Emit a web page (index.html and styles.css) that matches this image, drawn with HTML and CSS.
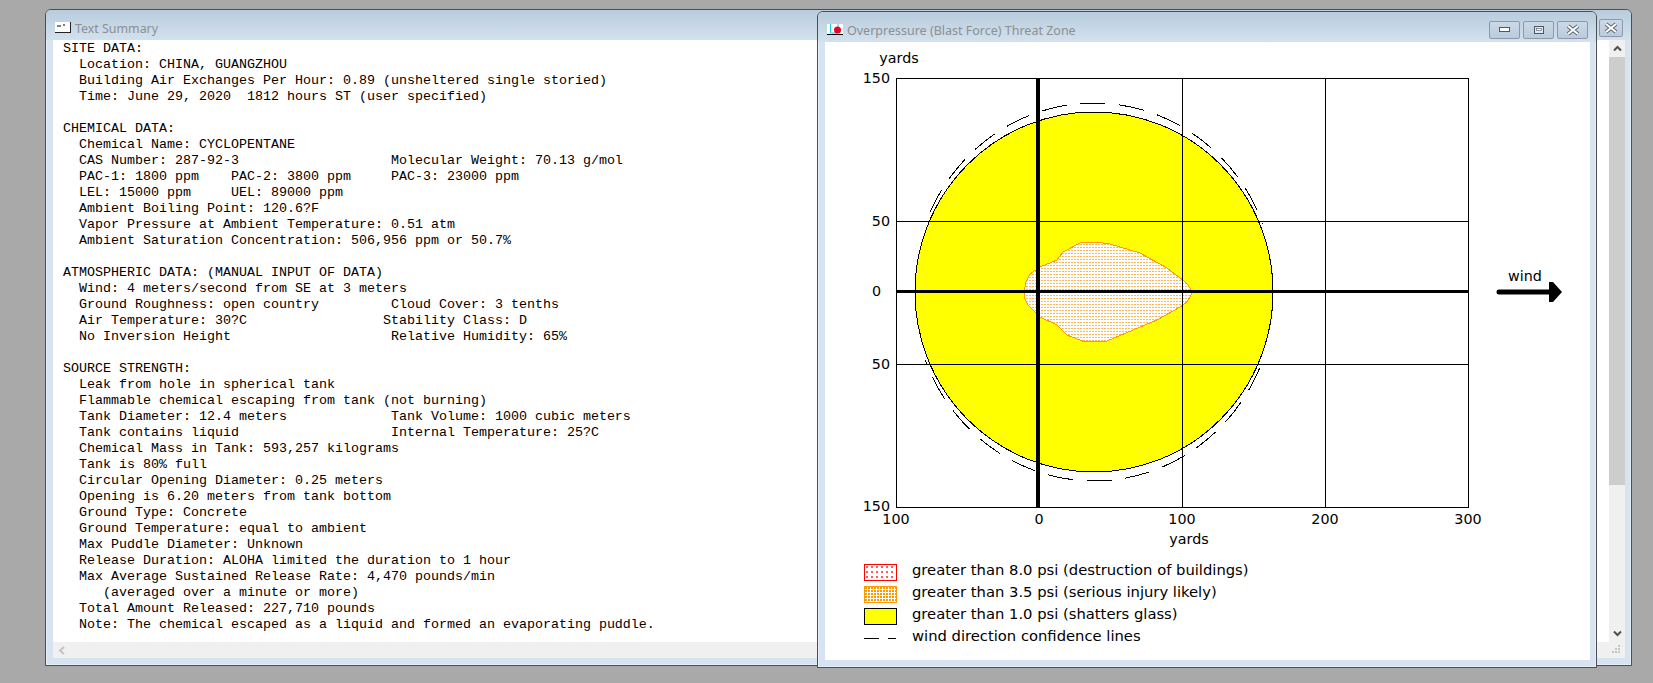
FILE: index.html
```html
<!DOCTYPE html>
<html lang="en">
<head>
	<meta charset="UTF-8">
	<title>ALOHA Threat Zone</title>
	<link rel="stylesheet" href="styles.css">
</head>
<body>
	<!-- back window -->
	<div class="window summary-win">
		<div class="titlebar">
			<svg class="title-icon" width="16" height="12" viewBox="0 0 16 12">
				<rect x="0" y="0" width="15" height="10" fill="#fff"/>
				<path d="M0 10.5H16M15.5 0V11" stroke="#222" fill="none"/>
				<path d="M3 3V5M5 3V5M8 3H10" stroke="#000" fill="none"/>
			</svg>
			<span class="title-text">Text Summary</span>
			<div class="win-btns">
				<div class="win-btn">
					<svg width="16" height="12" viewBox="0 0 16 12"><path d="M3 2L13 10M13 2L3 10" stroke="#5c6472" stroke-width="4"/><path d="M3 2L13 10M13 2L3 10" stroke="#fff" stroke-width="2"/></svg>
				</div>
			</div>
		</div>
		<div class="summary-body">
			<pre class="summary-text">SITE DATA:
  Location: CHINA, GUANGZHOU
  Building Air Exchanges Per Hour: 0.89 (unsheltered single storied)
  Time: June 29, 2020  1812 hours ST (user specified)

CHEMICAL DATA:
  Chemical Name: CYCLOPENTANE
  CAS Number: 287-92-3                   Molecular Weight: 70.13 g/mol
  PAC-1: 1800 ppm    PAC-2: 3800 ppm     PAC-3: 23000 ppm
  LEL: 15000 ppm     UEL: 89000 ppm
  Ambient Boiling Point: 120.6?F
  Vapor Pressure at Ambient Temperature: 0.51 atm
  Ambient Saturation Concentration: 506,956 ppm or 50.7%

ATMOSPHERIC DATA: (MANUAL INPUT OF DATA)
  Wind: 4 meters/second from SE at 3 meters
  Ground Roughness: open country         Cloud Cover: 3 tenths
  Air Temperature: 30?C                 Stability Class: D
  No Inversion Height                    Relative Humidity: 65%

SOURCE STRENGTH:
  Leak from hole in spherical tank
  Flammable chemical escaping from tank (not burning)
  Tank Diameter: 12.4 meters             Tank Volume: 1000 cubic meters
  Tank contains liquid                   Internal Temperature: 25?C
  Chemical Mass in Tank: 593,257 kilograms
  Tank is 80% full
  Circular Opening Diameter: 0.25 meters
  Opening is 6.20 meters from tank bottom
  Ground Type: Concrete
  Ground Temperature: equal to ambient
  Max Puddle Diameter: Unknown
  Release Duration: ALOHA limited the duration to 1 hour
  Max Average Sustained Release Rate: 4,470 pounds/min
     (averaged over a minute or more)
  Total Amount Released: 227,710 pounds
  Note: The chemical escaped as a liquid and formed an evaporating puddle.</pre>
			<div class="vscroll">
				<div class="scroll-btn">
					<svg width="9" height="7" viewBox="0 0 9 7"><path d="M1 5.5L4.5 2L8 5.5" fill="none" stroke="#505050" stroke-width="2"/></svg>
				</div>
				<div class="scroll-thumb"></div>
				<div class="scroll-track"></div>
				<div class="scroll-btn">
					<svg width="9" height="7" viewBox="0 0 9 7"><path d="M1 1.5L4.5 5L8 1.5" fill="none" stroke="#505050" stroke-width="2"/></svg>
				</div>
			</div>
		</div>
		<div class="hscroll">
			<svg width="8" height="9" viewBox="0 0 8 9"><path d="M6 1L2 4.5L6 8" fill="none" stroke="#c2c2c2" stroke-width="2"/></svg>
			<svg class="grip" width="12" height="12" viewBox="0 0 12 12"><path d="M8 1h2v2H8zM5 4h2v2H5zM8 4h2v2H8zM2 7h2v2H2zM5 7h2v2H5zM8 7h2v2H8z" fill="#c4c4c4"/></svg>
		</div>
	</div>

	<!-- front window -->
	<div class="window threat-win">
		<div class="titlebar">
			<svg class="title-icon" width="16" height="12" viewBox="0 0 16 12">
				<rect x="0" y="0" width="16" height="10" fill="#fff"/>
				<path d="M3.5 0V9H11M11 0V5" stroke="#19d3e6" fill="none"/>
				<circle cx="10.5" cy="6" r="3.5" fill="#f0002a"/>
				<path d="M0 10.5H16" stroke="#000"/>
			</svg>
			<span class="title-text">Overpressure (Blast Force) Threat Zone</span>
			<div class="win-btns">
				<div class="win-btn">
					<svg width="12" height="6" viewBox="0 0 12 6"><rect x="0.5" y="0.5" width="10" height="4" fill="#fff" stroke="#4e5664"/></svg>
				</div>
				<div class="win-btn">
					<svg width="12" height="10" viewBox="0 0 12 10"><rect x="1.5" y="1.5" width="9" height="7" fill="#dfe8f2" stroke="#4e5664"/><rect x="3.5" y="3.5" width="5" height="2" fill="#fff" stroke="#4e5664" stroke-width="0.6"/></svg>
				</div>
				<div class="win-btn">
					<svg width="16" height="12" viewBox="0 0 16 12"><path d="M3 2L13 10M13 2L3 10" stroke="#5c6472" stroke-width="4"/><path d="M3 2L13 10M13 2L3 10" stroke="#fff" stroke-width="2"/></svg>
				</div>
			</div>
		</div>
		<div class="threat-body">
			<svg class="chart" width="765" height="517" viewBox="825 42 765 517">
				<defs>
					<pattern id="dotsOrange" width="3" height="3" patternUnits="userSpaceOnUse">
						<rect width="3" height="3" fill="#fff"/>
						<rect x="0" y="1" width="2" height="1" fill="#ffb84d"/>
					</pattern>
					<!-- confidence lines meet the circle at about the 50 yard grid lines -->
					<clipPath id="plotClip">
						<rect x="896" y="78" width="573" height="146"/>
						<rect x="896" y="360" width="573" height="147"/>
					</clipPath>
				</defs>
				<rect class="plot-bg" x="896.5" y="78.5" width="572" height="429"/>
				<ellipse class="zone-yellow" cx="1094" cy="292" rx="179" ry="180"/>
				<ellipse class="confidence" cx="1094" cy="292" rx="181" ry="189" clip-path="url(#plotClip)"/>
				<path class="zone-orange" d="M1095 242L1080 243L1063 252L1057 260L1040 267L1030 274L1026 282L1024 292L1025 299L1028 305L1040 317L1057 325L1067 335L1085 342L1107 341L1133 330L1157 320L1180 307L1187 302L1191 295L1191 290L1188 285L1183 280L1167 268L1140 253L1110 244Z"/>
				<path class="grid" d="M1182.5 78V507M1325.5 78V507M896 221.5H1468M896 364.5H1468"/>
				<path class="axis-v" d="M1038 78V507"/>
				<path class="axis-h" d="M896 291.5H1468"/>
				<text x="899" y="63" text-anchor="middle">yards</text>
				<text x="890" y="83" text-anchor="end">150</text>
				<text x="890" y="226" text-anchor="end">50</text>
				<text x="881" y="296" text-anchor="end">0</text>
				<text x="890" y="369" text-anchor="end">50</text>
				<text x="890" y="511" text-anchor="end">150</text>
				<text x="896" y="524" text-anchor="middle">100</text>
				<text x="1039" y="524" text-anchor="middle">0</text>
				<text x="1182" y="524" text-anchor="middle">100</text>
				<text x="1325" y="524" text-anchor="middle">200</text>
				<text x="1468" y="524" text-anchor="middle">300</text>
				<text x="1189" y="544" text-anchor="middle">yards</text>
				<text x="1525" y="281" text-anchor="middle">wind</text>
				<path class="wind-shaft" d="M1499 292H1553"/>
				<path d="M1549 282L1553 282L1562 292L1553 302L1549 302Z" fill="#000"/>
			</svg>
			<ul class="legend">
				<li>
					<span class="swatch swatch-red"></span>
					greater than 8.0 psi (destruction of buildings)
				</li>
				<li>
					<span class="swatch swatch-orange"></span>
					greater than 3.5 psi (serious injury likely)
				</li>
				<li>
					<span class="swatch swatch-yellow"></span>
					greater than 1.0 psi (shatters glass)
				</li>
				<li>
					<svg class="swatch-line" width="33" height="17" viewBox="0 0 33 17"><path d="M0 8.5H15M24 8.5H32" stroke="#000"/></svg>
					wind direction confidence lines
				</li>
			</ul>
		</div>
	</div>
</body>
</html>
```
FILE: styles.css
```css
*{
	padding: 0;
	margin: 0;
	box-sizing: border-box;
}
body{
	width: 1653px;
	height: 683px;
	position: relative;
	overflow: hidden;
	background-color: #a9a9a9;
}
/* windows sit on a desktop, so these two are placed by hand */
.window{
	position: absolute;
	display: flex;
	flex-direction: column;
	border: 1px solid #4b4e52;
	border-radius: 6px 6px 0 0;
	background-color: #d7e3f1;
	box-shadow: inset 0 0 0 1px #e6eef7;
}
.summary-win{
	left: 45px;
	top: 9px;
	width: 1587px;
	height: 657px;
	padding: 0 6px 7px 7px;
}
.threat-win{
	left: 817px;
	top: 11px;
	width: 780px;
	height: 657px;
	padding: 0 6px 7px 7px;
}
.titlebar{
	height: 30px;
	flex: none;
	margin: 0 -6px 0 -7px;
	padding: 6px 8px 0 9px;
	display: flex;
	align-items: center;
	border-radius: 5px 5px 0 0;
	background: linear-gradient(#b8ccdc, #d3e1ee);
}
.title-icon{
	flex: none;
	margin-right: 4px;
}
.title-text{
	font: 12.4px "Noto Sans", sans-serif;
	color: #8c8f94;
}
.threat-win .title-text{
	font-size: 12.5px;
}
.win-btns{
	margin-left: auto;
	display: flex;
	gap: 3px;
}
.win-btn{
	width: 31px;
	height: 18px;
	display: flex;
	align-items: center;
	justify-content: center;
	border: 1px solid #8d99ab;
	border-radius: 2px;
	background: linear-gradient(#cbd9e6, #b9cbdc);
}
.summary-win .win-btn{
	width: 24px;
	height: 18px;
}
.summary-body{
	flex: 1;
	min-height: 0;
	display: flex;
	background-color: #fff;
}
.summary-text{
	flex: 1;
	min-width: 0;
	padding: 1px 0 0 10px;
	font: 13.33px/16px "Liberation Mono", monospace;
	color: #000;
}
.vscroll{
	width: 16px;
	flex: none;
	display: flex;
	flex-direction: column;
	background-color: #f0f0f0;
}
.scroll-btn{
	height: 17px;
	flex: none;
	display: flex;
	align-items: center;
	justify-content: center;
}
.scroll-thumb{
	height: 428px;
	flex: none;
	background-color: #cdcdcd;
}
.scroll-track{
	flex: 1;
}
.hscroll{
	height: 16px;
	flex: none;
	padding: 0 3px 0 5px;
	display: flex;
	align-items: center;
	justify-content: space-between;
	background-color: #f0f0f0;
}
.threat-body{
	flex: 1;
	min-height: 0;
	background-color: #fff;
}
.chart{
	display: block;
}
.chart text{
	font: 14.3px "DejaVu Sans", sans-serif;
	fill: #000;
}
.plot-bg{
	fill: #fff;
	stroke: #000;
	shape-rendering: crispEdges;
}
.zone-yellow{
	fill: #ffff00;
	stroke: #000;
	shape-rendering: crispEdges;
}
.confidence{
	fill: none;
	stroke: #000;
	stroke-dasharray: 25 14;
	shape-rendering: crispEdges;
}
.zone-orange{
	fill: url(#dotsOrange);
	stroke: #ff9900;
	shape-rendering: crispEdges;
}
.grid{
	fill: none;
	stroke: #000;
	shape-rendering: crispEdges;
}
.axis-v{
	stroke: #000;
	stroke-width: 4;
}
.axis-h{
	stroke: #000;
	stroke-width: 3;
}
.wind-shaft{
	stroke: #000;
	stroke-width: 5;
	stroke-linecap: round;
}
.legend{
	list-style: none;
	padding-left: 39px;
	font: 14.75px/22px "DejaVu Sans", sans-serif;
	color: #000;
}
.legend li{
	height: 22px;
	display: flex;
	align-items: flex-start;
	gap: 15px;
}
.swatch{
	width: 33px;
	height: 17px;
	flex: none;
	margin-top: 5px;
	border: 1px solid #000;
}
.swatch-line{
	flex: none;
	margin-top: 5px;
}
.swatch-red{
	border-color: #ff0000;
	background-color: #fff;
	background-image: radial-gradient(circle at 2px 2px, #ff0000 0.6px, transparent 0.9px);
	background-size: 5px 5px;
}
.swatch-orange{
	border-color: #ff9900;
	background-color: #fff;
	background-image: radial-gradient(circle at 1px 1px, #ff9900 0.9px, transparent 1px);
	background-size: 3px 3px;
}
.swatch-yellow{
	background-color: #ffff00;
}
```
